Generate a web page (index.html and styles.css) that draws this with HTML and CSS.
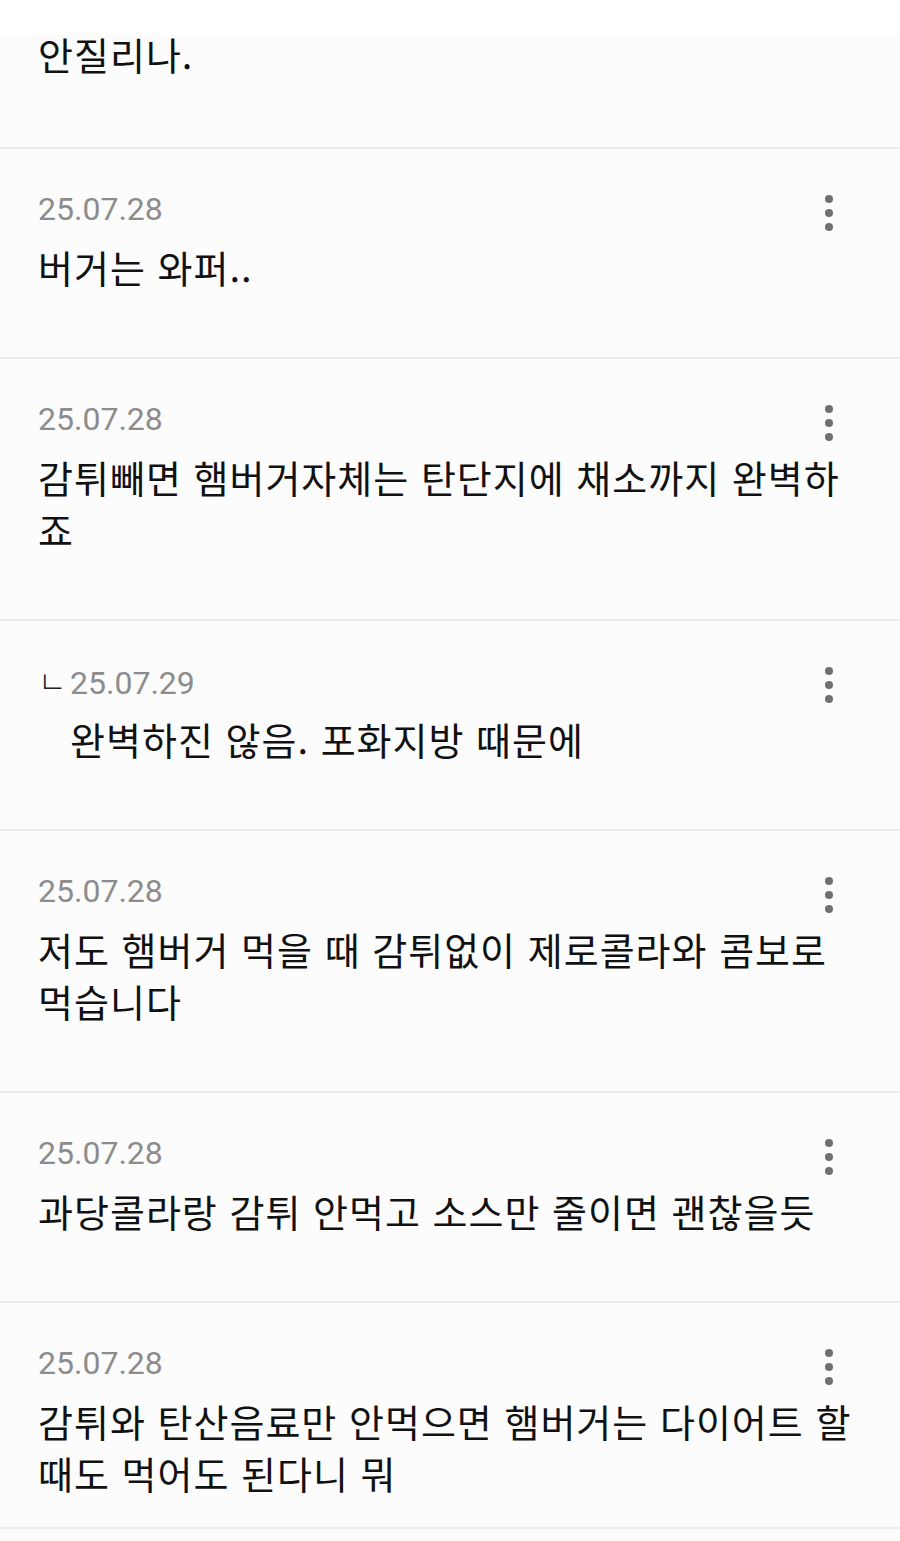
FILE: index.html
```html
<!DOCTYPE html>
<html lang="ko">
<head>
  <meta charset="UTF-8">
  <meta name="viewport" content="width=device-width, initial-scale=1.0">
  <title>댓글</title>
  <link rel="stylesheet" href="styles.css">
</head>
<body>

  <div class="topbar"></div>

  <div class="comments">
    <div class="comment first">
      <p class="text">안질리나.</p>
    </div>

    <div class="comment">
      <div class="head">
        <span class="date">25.07.28</span>
        <button class="more" aria-label="더보기"><svg width="24" height="40" viewBox="0 0 24 40"><circle cx="12" cy="6" r="4"/><circle cx="12" cy="20" r="4"/><circle cx="12" cy="34" r="4"/></svg></button>
      </div>
      <p class="text">버거는 와퍼..</p>
    </div>

    <div class="comment">
      <div class="head">
        <span class="date">25.07.28</span>
        <button class="more" aria-label="더보기"><svg width="24" height="40" viewBox="0 0 24 40"><circle cx="12" cy="6" r="4"/><circle cx="12" cy="20" r="4"/><circle cx="12" cy="34" r="4"/></svg></button>
      </div>
      <p class="text">감튀빼면 햄버거자체는 탄단지에 채소까지 완벽하죠</p>
    </div>

    <div class="comment reply">
      <div class="head">
        <span class="date"><span class="mark">ㄴ</span>25.07.29</span>
        <button class="more" aria-label="더보기"><svg width="24" height="40" viewBox="0 0 24 40"><circle cx="12" cy="6" r="4"/><circle cx="12" cy="20" r="4"/><circle cx="12" cy="34" r="4"/></svg></button>
      </div>
      <p class="text">완벽하진 않음. 포화지방 때문에</p>
    </div>

    <div class="comment">
      <div class="head">
        <span class="date">25.07.28</span>
        <button class="more" aria-label="더보기"><svg width="24" height="40" viewBox="0 0 24 40"><circle cx="12" cy="6" r="4"/><circle cx="12" cy="20" r="4"/><circle cx="12" cy="34" r="4"/></svg></button>
      </div>
      <p class="text">저도 햄버거 먹을 때 감튀없이 제로콜라와 콤보로 먹습니다</p>
    </div>

    <div class="comment">
      <div class="head">
        <span class="date">25.07.28</span>
        <button class="more" aria-label="더보기"><svg width="24" height="40" viewBox="0 0 24 40"><circle cx="12" cy="6" r="4"/><circle cx="12" cy="20" r="4"/><circle cx="12" cy="34" r="4"/></svg></button>
      </div>
      <p class="text">과당콜라랑 감튀 안먹고 소스만 줄이면 괜찮을듯</p>
    </div>

    <div class="comment last">
      <div class="head">
        <span class="date">25.07.28</span>
        <button class="more" aria-label="더보기"><svg width="24" height="40" viewBox="0 0 24 40"><circle cx="12" cy="6" r="4"/><circle cx="12" cy="20" r="4"/><circle cx="12" cy="34" r="4"/></svg></button>
      </div>
      <p class="text">감튀와 탄산음료만 안먹으면 햄버거는 다이어트 할 때도 먹어도 된다니 뭐</p>
    </div>
  </div>

</body>
</html>
```

FILE: styles.css
```css
/* comment list */
body {
  margin: 0;
  background: #fcfcfc;
  font-family: "Noto Sans CJK KR", Roboto, sans-serif;
  color: #111;
}

.topbar {
  height: 34px;
  background: #fff;
}

.comment {
  padding: 40px 38px 64px;
  border-bottom: 2px solid #ececec;
}

.comment.first {
  padding-top: 0;
  padding-bottom: 67px;
}

.comment.first .text {
  margin-top: -6px;
}

.comment.last {
  padding-bottom: 28px;
}

.head {
  display: flex;
  justify-content: space-between;
  align-items: center;
  height: 40px;
  margin-bottom: 12px;
}

.date {
  font-family: Roboto, "Noto Sans CJK KR", sans-serif;
  font-size: 32px;
  color: #8c8c8c;
  line-height: 40px;
}

.mark {
  font-family: "Noto Sans CJK KR", sans-serif;
  font-size: 31px;
  font-weight: 300;
  color: #222;
  display: inline-block;
  width: 32px;
  vertical-align: 1px;
}

.more {
  border: 0;
  background: none;
  padding: 0;
  margin-right: 21px;
  margin-top: 8px;
  height: 40px;
  fill: #6f6f6f;
}

.more svg {
  display: block;
}

.text {
  margin: 0;
  font-size: 38px;
  letter-spacing: 1px;
  line-height: 52px;
}

.reply .text {
  padding-left: 32px;
}
```
